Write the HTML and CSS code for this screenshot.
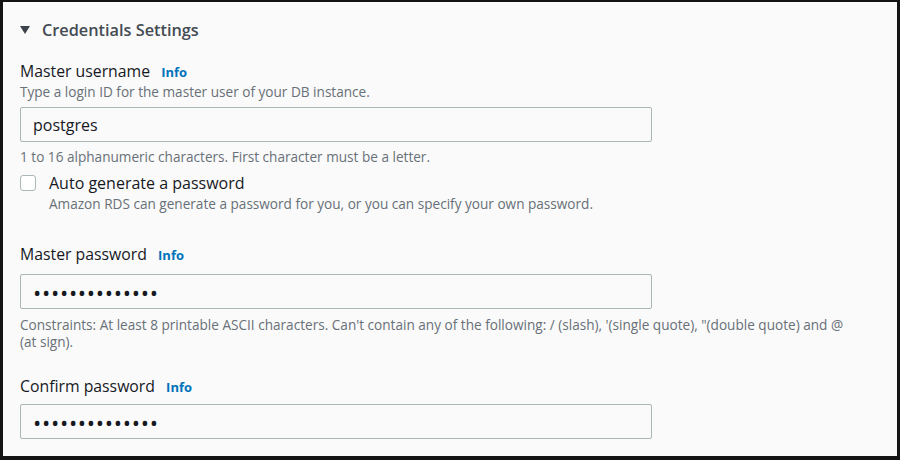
FILE: index.html
```html
<!DOCTYPE html>
<html lang="en">

<head>
  <meta charset="UTF-8">
  <meta name="viewport" content="width=device-width, initial-scale=1.0">
  <title>Credentials Settings</title>
  <link rel="stylesheet" href="styles.css">
</head>

<body>
  <div class="panel">
    <div class="section-header">
      <span class="caret"></span>
      <span>Credentials Settings</span>
    </div>

    <div class="field">
      <label for="masterUsername">Master username <a class="info">Info</a></label>
      <div class="description">Type a login ID for the master user of your DB instance.</div>
      <input type="text" id="masterUsername" value="postgres">
      <div class="hint">1 to 16 alphanumeric characters. First character must be a letter.</div>
    </div>

    <div class="checkbox-field">
      <div class="checkbox-row">
        <input type="checkbox" id="autoGenerate">
        <label for="autoGenerate">Auto generate a password</label>
      </div>
      <div class="checkbox-description">Amazon RDS can generate a password for you, or you can specify your own password.</div>
    </div>

    <div class="field field-password">
      <label for="masterPassword">Master password <a class="info">Info</a></label>
      <input type="password" id="masterPassword" class="password" value="12345678901234">
      <div class="hint">Constraints: At least 8 printable ASCII characters. Can't contain any of the following: / (slash), '(single quote), "(double quote) and @ (at&nbsp;sign).</div>
    </div>

    <div class="field field-confirm">
      <label for="confirmPassword">Confirm password <a class="info">Info</a></label>
      <input type="password" id="confirmPassword" class="password" value="12345678901234">
    </div>
  </div>
</body>

</html>
```

FILE: styles.css
```css
body {
  margin: 0;
  padding: 2px 3px 4px 3px;
  background-color: #141414;
  font-family: "Open Sans", "Noto Sans", sans-serif;
  color: #16191f;
}

.panel {
  height: 454px;
  box-sizing: border-box;
  padding: 17px 17px 0 17px;
  background-color: #fafafa;
  overflow: hidden;
}

.section-header {
  display: flex;
  align-items: center;
  gap: 12px;
  height: 22px;
  font-size: 16.3px;
  font-weight: 600;
  color: #444b53;
}

.caret {
  width: 0;
  height: 0;
  border-left: 5.5px solid transparent;
  border-right: 5.5px solid transparent;
  border-top: 8px solid #3c434b;
}

.field label {
  display: block;
  margin-top: 20px;
  line-height: 20px;
  font-size: 15.8px;
}

.info {
  margin-left: 7px;
  font-size: 13px;
  font-weight: 700;
  color: #0073bb;
}

.description,
.hint,
.checkbox-description {
  font-size: 13.6px;
  line-height: 18px;
  color: #687078;
}

.description {
  margin-top: 1px;
}

input[type="text"],
input[type="password"] {
  display: block;
  width: 632px;
  height: 35px;
  margin-top: 6px;
  padding: 0 12px;
  box-sizing: border-box;
  border: 1px solid #aab7b8;
  border-radius: 2px;
  background: #fafafa;
  font-family: inherit;
  font-size: 16px;
  color: #16191f;
}

input.password {
  font-size: 22px;
  letter-spacing: 0.7px;
}

.hint {
  margin-top: 6px;
  line-height: 17px;
}

.checkbox-field {
  margin-top: 8px;
}

.checkbox-row {
  display: flex;
  align-items: center;
  gap: 13px;
  line-height: 20px;
  font-size: 16px;
}

.checkbox-row input {
  appearance: none;
  width: 16px;
  height: 16px;
  margin: 0;
  border: 1px solid #aab7b8;
  border-radius: 3px;
  background: #fff;
}

.checkbox-description {
  margin-top: 2px;
  padding-left: 29px;
}

.field-password label {
  margin-top: 31px;
}

.field-password input {
  margin-top: 9px;
}

.field-password .hint {
  margin-top: 7px;
  padding-right: 10px;
}

.field-confirm label {
  margin-top: 26px;
}

.field-confirm input {
  margin-top: 7px;
}
```
